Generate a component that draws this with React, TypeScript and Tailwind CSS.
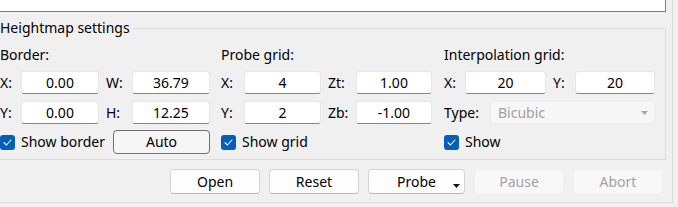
import React from "react";

const font = { fontFamily: '"Noto Sans", "Open Sans", sans-serif' };

function Field({ value }: { value: string }) {
  return (
    <div className="h-[23px] bg-white border border-[#e6e6e6] border-b-[#868686] rounded-[3px] flex items-center justify-center text-black leading-none">
      {value}
    </div>
  );
}

function Label({ children }: { children: React.ReactNode }) {
  return <div className="h-[23px] flex items-center text-black leading-none">{children}</div>;
}

function Check({ label }: { label: string }) {
  return (
    <div className="flex items-center gap-[6px] h-[24px]">
      <div className="w-[15px] h-[15px] rounded-[3px] bg-[#005fb8] flex items-center justify-center">
        <svg width="9" height="7" viewBox="0 0 9 7">
          <path d="M1 3.6 L3.4 6 L8 1" fill="none" stroke="white" strokeWidth="1.1" strokeLinecap="round" strokeLinejoin="round" />
        </svg>
      </div>
      <span className="text-black leading-none">{label}</span>
    </div>
  );
}

function Btn({ label, w, disabled, menu }: { label: string; w: string; disabled?: boolean; menu?: boolean }) {
  return (
    <div
      className={
        "relative h-[25px] rounded-[4px] border flex items-center justify-center leading-none " +
        w +
        (disabled
          ? " bg-[#f8f8f8] border-[#efefef] text-[#a3a3a3]"
          : " bg-[#fdfdfd] border-[#d4d4d4] border-b-[#b8b8b8] text-black")
      }
    >
      {label}
      {menu && (
        <svg className="absolute right-[4px] bottom-[5px]" width="7" height="4" viewBox="0 0 7 4">
          <path d="M0 0 L7 0 L3.5 4 Z" fill="#111" />
        </svg>
      )}
    </div>
  );
}

export default function App() {
  return (
    <div className="w-[678px] h-[207px] bg-[#f0f0f0] overflow-hidden text-[14px]" style={font}>
      <div className="w-[673px] h-[203px] border-r border-b border-[#dadada]">
        <div className="w-[666px]">
          <div className="h-[12px] bg-white border-b border-r border-[#7d7d7d]" />
          <fieldset className="mt-[6px] border-t border-r border-b border-[#dcdcdc] pt-[7px] pb-[5px] pr-[10px]">
            <legend className="pr-[3px] leading-[20px] h-[20px] text-black">Heightmap settings</legend>
            <div className="flex">
              {/* Border column */}
              <div className="w-[210px] flex flex-col">
                <div className="h-[20px] flex items-center leading-none">Border:</div>
                <div className="grid grid-cols-[21px_78px_33px_78px] mt-[6px]">
                  <Label>X:</Label>
                  <Field value="0.00" />
                  <div className="pl-[7px]"><Label>W:</Label></div>
                  <Field value="36.79" />
                </div>
                <div className="grid grid-cols-[21px_78px_33px_78px] mt-[7px]">
                  <Label>Y:</Label>
                  <Field value="0.00" />
                  <div className="pl-[7px]"><Label>H:</Label></div>
                  <Field value="12.25" />
                </div>
                <div className="flex items-center mt-[6px] h-[24px]">
                  <div className="w-[113px]"><Check label="Show border" /></div>
                  <div className="w-[97px] h-[24px] rounded-[4px] border border-[#6f6f6f] bg-[#f6f6f6] flex items-center justify-center leading-none">
                    Auto
                  </div>
                </div>
              </div>
              {/* Probe grid column */}
              <div className="w-[211px] ml-[11px] flex flex-col">
                <div className="h-[20px] flex items-center leading-none">Probe grid:</div>
                <div className="grid grid-cols-[23px_77px_35px_76px] mt-[6px]">
                  <Label>X:</Label>
                  <Field value="4" />
                  <div className="pl-[7px]"><Label>Zt:</Label></div>
                  <Field value="1.00" />
                </div>
                <div className="grid grid-cols-[23px_77px_35px_76px] mt-[7px]">
                  <Label>Y:</Label>
                  <Field value="2" />
                  <div className="pl-[7px]"><Label>Zb:</Label></div>
                  <Field value="-1.00" />
                </div>
                <div className="mt-[6px]"><Check label="Show grid" /></div>
              </div>
              {/* Interpolation column */}
              <div className="w-[211px] ml-[12px] flex flex-col">
                <div className="h-[20px] flex items-center leading-none">Interpolation grid:</div>
                <div className="grid grid-cols-[21px_81px_29px_80px] mt-[6px]">
                  <Label>X:</Label>
                  <Field value="20" />
                  <div className="pl-[7px]"><Label>Y:</Label></div>
                  <Field value="20" />
                </div>
                <div className="grid grid-cols-[46px_165px] mt-[7px]">
                  <Label>Type:</Label>
                  <div className="relative h-[23px] rounded-[3px] bg-[#f7f7f7] border border-[#ededed] flex items-center pl-[7px] text-[#a0a0a0] leading-none">
                    Bicubic
                    <svg className="absolute right-[6px] top-[9px]" width="7" height="4" viewBox="0 0 7 4">
                      <path d="M0 0 L7 0 L3.5 4 Z" fill="#a8a8a8" />
                    </svg>
                  </div>
                </div>
                <div className="mt-[6px]"><Check label="Show" /></div>
              </div>
            </div>
          </fieldset>
          <div className="flex gap-[9px] ml-[170px] mt-[9px]">
            <Btn label="Open" w="w-[90px]" />
            <Btn label="Reset" w="w-[90px]" />
            <Btn label="Probe" w="w-[97px]" menu />
            <Btn label="Pause" w="w-[90px]" disabled />
            <Btn label="Abort" w="w-[90px]" disabled />
          </div>
        </div>
      </div>
    </div>
  );
}
